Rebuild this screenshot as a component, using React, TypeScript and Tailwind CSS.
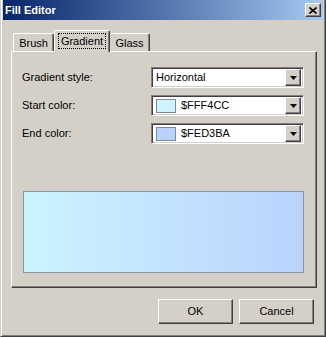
import React from 'react'

const raised =
  'border border-t-white border-l-white border-r-[#404040] border-b-[#404040] shadow-[inset_-1px_-1px_0_#808080]'

function Combo({ children }: { children: React.ReactNode }) {
  return (
    <div className="w-[153px] h-[21px] bg-white border border-t-[#808080] border-l-[#808080] border-r-white border-b-white shadow-[inset_1px_1px_0_#404040,inset_-1px_-1px_0_#d4d0c8] flex items-center p-[2px]">
      <div className="flex-1 flex items-center pl-[2px] text-[11px] text-black">{children}</div>
      <div className={`w-[16px] h-[17px] bg-[#d4d0c8] flex items-center justify-center ${raised}`}>
        <svg width="7" height="4" viewBox="0 0 7 4">
          <path d="M0 0h7L3.5 4z" fill="#000" />
        </svg>
      </div>
    </div>
  )
}

function Swatch({ color }: { color: string }) {
  return <span className="inline-block w-[20px] h-[14px] border border-[#7f8a99] mr-[5px]" style={{ background: color }} />
}

export default function App() {
  const rows = [
    { label: 'Gradient style:', value: <span>Horizontal</span> },
    { label: 'Start color:', value: <><Swatch color="#ccf4ff" /><span>$FFF4CC</span></> },
    { label: 'End color:', value: <><Swatch color="#bad3fe" /><span>$FED3BA</span></> },
  ]

  return (
    <div className="w-[326px] h-[337px] bg-[#d4d0c8] border-l border-l-[#d4d0c8] border-r border-r-[#404040] border-b border-b-[#404040] shadow-[inset_1px_0_0_#fff,inset_-1px_-1px_0_#808080] pl-[2px] pr-[2px] font-['Liberation_Sans',Arial,sans-serif] text-[11px] text-black flex flex-col">
      {/* title bar */}
      <div className="h-[20px] bg-gradient-to-r from-[#0a246a] to-[#a6caf0] flex items-center justify-between pl-[2px] pr-[2px]">
        <span className="text-white font-bold text-[11px]">Fill Editor</span>
        <div className={`w-[16px] h-[14px] bg-[#d4d0c8] flex items-center justify-center ${raised}`}>
          <svg width="8" height="7" viewBox="0 0 8 7">
            <path d="M0.5 0.5L7.5 6.5M7.5 0.5L0.5 6.5" stroke="#000" strokeWidth="1.6" />
          </svg>
        </div>
      </div>

      <div className="pl-[8px] pr-[6px] pt-[10px]">
        {/* tabs */}
        <div className="flex items-end h-[21px] pl-[2px]">
          <div className="w-[41px] h-[18px] border-t border-l border-t-white border-l-white border-r border-r-[#404040] shadow-[inset_-1px_0_0_#808080] rounded-t-[2px] flex items-center justify-center pt-[1px]">
            Brush
          </div>
          <div className="relative z-10 w-[56px] h-[22px] -mb-px bg-[#d4d0c8] border-t border-l border-t-white border-l-white border-r border-r-[#404040] shadow-[inset_-1px_0_0_#808080] rounded-t-[2px] flex items-start justify-center pt-[2px]">
            <span className="border border-dotted border-black px-[2px] leading-[14px]">Gradient</span>
          </div>
          <div className="w-[40px] h-[18px] border-t border-r border-t-white border-r-[#404040] shadow-[inset_-1px_0_0_#808080] rounded-t-[2px] flex items-center justify-center pt-[1px]">
            Glass
          </div>
        </div>

        {/* panel */}
        <div className="h-[237px] border border-t-white border-l-white border-r-[#404040] border-b-[#404040] shadow-[inset_-1px_-1px_0_#808080] pt-[15px] pl-[10px] pr-[12px]">
          <div className="flex flex-col gap-[7px]">
            {rows.map((r) => (
              <div key={r.label} className="flex items-center justify-between">
                <span>{r.label}</span>
                <Combo>{r.value}</Combo>
              </div>
            ))}
          </div>
          <div className="mt-[47px] ml-[1px] h-[82px] border border-[#8a96a8] bg-gradient-to-r from-[#ccf4ff] to-[#bad3fe]" />
        </div>

        {/* buttons */}
        <div className="flex justify-end gap-[6px] pt-[11px] pr-[3px]">
          <button className={`w-[75px] h-[25px] bg-[#d4d0c8] ${raised}`}>OK</button>
          <button className={`w-[75px] h-[25px] bg-[#d4d0c8] ${raised}`}>Cancel</button>
        </div>
      </div>
    </div>
  )
}
